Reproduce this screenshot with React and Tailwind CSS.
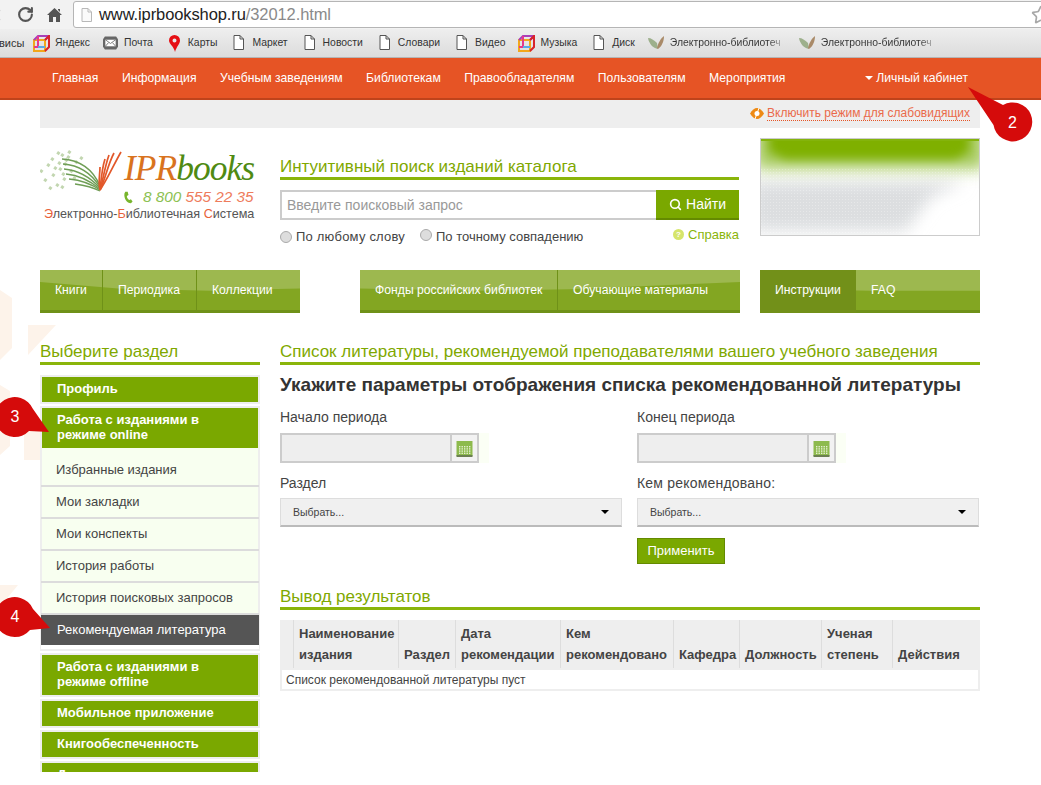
import React from "react";
import { RotateCw, ChevronLeft, Search, Star } from "lucide-react";

const FileIcon = () => (
  <svg width="11" height="15" viewBox="0 0 11 15" className="shrink-0">
    <path d="M1 .5h6l3.500 3.500v10.500h-9.500z M7 .5v3.500h3.500" fill="#fff" stroke="#555" strokeWidth="1" />
  </svg>
);
const Cube = () => (
  <svg width="17" height="17" viewBox="0 0 17 17" className="shrink-0" fill="none" strokeWidth="2">
    <path d="M1 5h11v11H1z" stroke="#f2a71b" />
    <path d="M1 5l4-4h11l-4 4" stroke="#a83fb8" />
    <path d="M12 5l4-4v11l-4 4" stroke="#d8232a" />
    <path d="M5 1v11H1" stroke="#e6398c" />
    <path d="M5 12h7" stroke="#5aa9e6" />
  </svg>
);
const Mail = () => (
  <svg width="15" height="16" viewBox="0 0 16 16" className="shrink-0">
    <path d="M2 1h12l2 3v8l-2 3H2l-2-3V4z" fill="#666" />
    <rect x="2.500" y="4.500" width="11" height="7" fill="#fff" />
    <path d="M2.500 4.500L8 8.500l5.500-4M2.500 11.500L6 7.500M13.500 11.500L10 7.500" fill="none" stroke="#777" />
  </svg>
);
const Pin = () => (
  <svg width="11" height="17" viewBox="0 0 11 17" className="shrink-0">
    <path fillRule="evenodd" d="M5.500 0a5.500 5.500 0 0 1 5.500 5.500c0 3.500-3.500 6-5 11.500C5 11.500 0 9 0 5.500A5.500 5.500 0 0 1 5.500 0zm0 3.500a2 2 0 1 0 0 4 2 2 0 0 0 0-4z" fill="#e60f14" />
  </svg>
);
const Wing = () => (
  <svg width="17" height="15" viewBox="0 0 17 15" className="shrink-0">
    <path d="M0 3c3 0 6 2 9 5l1 6C5 13 1 9 0 3z" fill="#9db08c" />
    <path d="M9 13C10 8 13 3 16 1c0 5-2 10-6 13z" fill="#a98a68" />
  </svg>
);

const Bookmark = ({ icon, children, className = "" }) => (
  <div className={`flex items-center shrink-0 ${className}`}>
    {icon}
    <span>{children}</span>
  </div>
);

const Callout = ({ d, label, className, tx, ty, w, h }) => (
  <svg width={w} height={h} viewBox={`0 0 ${w} ${h}`} className={`absolute z-20 ${className}`}>
    <path d={d} fill="#d50b0b" />
    <text x={tx} y={ty} fill="#fff" fontSize="16" textAnchor="middle" fontFamily="Liberation Sans, sans-serif">{label}</text>
  </svg>
);

const NavGroup = ({ className = "", gloss, children }) => (
  <div className={`relative flex h-[43px] bg-[#83a622] border-b-[3px] border-[#6f9118] ${className}`}>
    <div className={`absolute inset-0 bg-[#9db84f] ${gloss}`} />
    {children}
  </div>
);
const NavItem = ({ children, border, active, className = "" }) => (
  <div className={`relative z-10 flex items-center text-[12.200px] text-white ${border ? "border-r border-[#6f9118]" : ""} ${active ? "bg-[#729019] -mb-[3px] pb-[3px]" : ""} ${className}`}>
    {children}
  </div>
);

const GreenItem = ({ children, className = "" }) => (
  <div className={`border-2 border-[#eeeeee] ${className}`}>
    <div className="bg-[#7aa800] text-white font-bold text-[13px] leading-[15px] px-[15px] pt-[4px] pb-[6px] whitespace-nowrap">{children}</div>
  </div>
);
const SubItem = ({ children, className = "" }) => (
  <div className={`h-[32px] flex items-center pl-[15px] text-[13px] text-[#444] border-b-2 border-[#dcdcdc] mx-[-1px] ${className}`}>{children}</div>
);

const Title = ({ children, className = "" }) => (
  <div className={`text-[17px] leading-[18px] text-[#7fa800] border-b-[3px] border-[#8ab50a] pb-[1px] whitespace-nowrap ${className}`}>{children}</div>
);

const Calendar = () => (
  <svg width="17" height="17" viewBox="0 0 17 17">
    <rect x="0.500" y="1" width="16" height="15" fill="#8dba4d" />
    <rect x="0.500" y="15" width="16" height="2" fill="#6b7f52" />
    <g fill="#e6f1d4">
      {[0, 1, 2, 3, 4].map((i) =>
        [0, 1, 2, 3].map((j) => <rect key={`${i}${j}`} x={3 + i * 2.500} y={6 + j * 2.200} width="1.400" height="1.400" />)
      )}
    </g>
  </svg>
);

const DateField = () => (
  <div className="w-[209px] bg-[#fbfff5]">
    <div className="w-[199px] h-[30px] border-2 border-[#cccccc] bg-[#eeeeee] flex justify-end">
      <div className="w-[27px] bg-[#f2f2f2] border-l-2 border-[#cccccc] flex items-center justify-center">
        <Calendar />
      </div>
    </div>
  </div>
);

const SelectBox = () => (
  <div className="w-[342px] h-[29px] bg-[#f0f0f0] border border-[#dddddd] border-b-2 border-b-[#bbbbbb] flex items-center justify-between px-[12px] text-[10.500px] text-[#444]">
    <span>Выбрать...</span>
    <span className="w-0 h-0 border-x-[4px] border-x-transparent border-t-[4px] border-t-black" />
  </div>
);

const Radio = () => (
  <span className="inline-block w-[12px] h-[12px] rounded-full border border-[#aaa] bg-[#dddddd] shrink-0" />
);

const columns = [
  ["", ""],
  ["Наименование", "издания"],
  ["", "Раздел"],
  ["Дата", "рекомендации"],
  ["Кем", "рекомендовано"],
  ["", "Кафедра"],
  ["", "Должность"],
  ["Ученая", "степень"],
  ["", "Действия"],
];

const Logo = () => (
  <div className="w-[240px] h-[92px] relative">
    <svg width="100" height="62" viewBox="0 0 100 62" className="absolute left-0 top-[4px]">
      <g fill="#c2d6b0">
        {[[1,27],[5,36],[8,21],[13,31],[17,41],[12,15],[20,25],[24,35],[28,13],[25,20],[31,27],[34,34],[36,18],[29,8],[22,43],[10,44],[41,14],[18,9],[22,11],[26,16],[19,19],[15,24],[23,30]].map(([x, y], i) => (
          <rect key={i} x={x} y={y} width="3" height="3" transform={`rotate(35 ${x} ${y})`} />
        ))}
      </g>
      <g fill="none" stroke="#6f9e56" strokeWidth="1.300">
        <path d="M22 17C38 18 52 25 60 44" />
        <path d="M23 22C37 23 50 29 60 45" />
        <path d="M24 27C36 28 48 33 60 46" />
        <path d="M26 32C37 33 48 37 60 47" />
        <path d="M29 37C39 38 50 41 60 48" />
        <path d="M35 42C42 43 52 45 60 49" />
      </g>
      <g fill="none" stroke="#e2582a" strokeWidth="1.700">
        <path d="M60 48C58 40 60 32 60 25" />
        <path d="M60 48C61 38 62 26 65 17" />
        <path d="M60 48C63 38 65 24 69 13" />
        <path d="M60 48C65 38 68 22 74 11" />
        <path d="M60 48C67 38 74 22 81 10" />
      </g>
    </svg>
    <div className="absolute left-[84px] top-[10px] text-[35.500px] leading-[40px] italic whitespace-nowrap font-['Liberation_Serif',serif] tracking-[-1px]">
      <span className="text-[#d9731e]">IPR</span><span className="text-[#4f8a12]">books</span>
    </div>
    <svg width="11" height="13" viewBox="0 0 12 16" className="absolute left-[83px] top-[53px]">
      <path d="M2 1l3 0 1 4-2 1c0 2 1 4 3 5l2-1 2 3-2 2C4 15 0 9 1 3z" fill="#78b52d" />
    </svg>
    <div className="absolute left-[103px] top-[50px] text-[15.300px] leading-[18px] italic whitespace-nowrap text-[#8cc152]">
      8 800 <span className="text-[#ee7c5c]">555 22 35</span>
    </div>
    <div className="absolute left-[4px] top-[68px] text-[12.600px] leading-[16px] whitespace-nowrap text-[#555]">
      <span className="text-[#e8623a]">Э</span>лектронно-<span className="text-[#e8623a]">Б</span>иблиотечная <span className="text-[#e8623a]">С</span>истема
    </div>
  </div>
);

const Banner = () => (
  <div className="w-[220px] h-[98px] border border-[#cccccc] overflow-hidden">
    <svg width="218" height="96" viewBox="0 0 218 96">
      <defs>
        <filter id="b1" x="-20%" y="-60%" width="140%" height="220%"><feGaussianBlur stdDeviation="8" /></filter>
        <filter id="b2" x="-20%" y="-60%" width="140%" height="220%"><feGaussianBlur stdDeviation="5" /></filter>
        <pattern id="dots" width="3" height="3" patternUnits="userSpaceOnUse"><rect width="1" height="1" fill="#fff" fillOpacity="0.300" /></pattern>
      </defs>
      <rect width="218" height="96" fill="#ffffff" />
      <path d="M-10 42H205L170 58 145 92H-10z" fill="#dcdee0" filter="url(#b1)" />
      <path d="M-6 -16H224V30H-6z" fill="#a4c95a" filter="url(#b1)" />
      <path d="M8 -12H208V12L195 20H24L8 12z" fill="#7fb006" filter="url(#b2)" />
      <rect y="30" width="218" height="66" fill="url(#dots)" />
      <rect x="0" y="0" width="218" height="2" fill="#84b40c" />
    </svg>
  </div>
);

export default function App() {
  return (
    <div className="relative w-[1041px] h-[785px] overflow-hidden bg-white font-['Liberation_Sans',sans-serif]">
      {/* faint background decoration */}
      <svg width="60" height="400" viewBox="0 0 60 400" className="absolute left-0 top-[285px]">
        <g fill="#fdf3ea">
          <path d="M0 5l12 8v50L0 75z" />
          <path d="M28 40h28l-28 30z" />
          <path d="M0 100l10 6v55L0 170z" />
          <path d="M24 120l20 30v25H24z" />
          <path d="M0 300h18l-18 22z" />
        </g>
      </svg>

      {/* browser toolbar */}
      <div className="relative h-[29px] bg-[#f2f2f2] flex items-center">
        <ChevronLeft size={18} strokeWidth={3} className="text-[#c4c4c4] -ml-[12px]" />
        <RotateCw size={17} strokeWidth={3} className="text-[#555] ml-[11px]" />
        <svg width="15" height="14" viewBox="0 0 15 14" className="ml-[13px] shrink-0">
          <path d="M7.500 0L15 7h-2v7H9V9H6v5H2V7H0z M11 1h2v3l-2-2z" fill="#555" />
        </svg>
        <div className="ml-[11px] flex-1 h-[27px] bg-white border border-[#b5b5b5] rounded-l-[3px] flex items-center pl-[7px] -mr-[2px]">
          <svg width="11" height="14" viewBox="0 0 11 14" className="shrink-0">
            <path d="M1 .5h6l3.500 3.500v9.500h-9.500z M7 .5v3.500h3.500" fill="#fafafa" stroke="#b8b8b8" />
          </svg>
          <span className="ml-[7px] text-[16.500px] tracking-[-0.100px] text-[#222]">www.iprbookshop.ru<span className="text-[#8a8a8a]">/32012.html</span></span>
          <Star size={20} className="ml-auto -mr-[9px] text-[#a8a8a8]" />
        </div>
      </div>

      {/* bookmarks bar */}
      <div className="h-[29px] bg-gradient-to-b from-[#eeeeee] to-[#dcdcdc] border-b border-[#b5b5b5] flex items-center text-[10.400px] text-[#333] gap-[16px] whitespace-nowrap overflow-hidden">
        <span className="w-[34px] shrink-0 -mr-[16px] -ml-[1px] text-[11px]">висы</span>
        <Bookmark icon={<Cube />} className="gap-[5px]">Яндекс</Bookmark>
        <Bookmark icon={<Mail />} className="gap-[6px] -ml-[3px]">Почта</Bookmark>
        <Bookmark icon={<Pin />} className="gap-[8px]">Карты</Bookmark>
        <Bookmark icon={<FileIcon />} className="gap-[8px]">Маркет</Bookmark>
        <Bookmark icon={<FileIcon />} className="gap-[8px]">Новости</Bookmark>
        <Bookmark icon={<FileIcon />} className="gap-[8px]">Словари</Bookmark>
        <Bookmark icon={<FileIcon />} className="gap-[8px]">Видео</Bookmark>
        <Bookmark icon={<Cube />} className="gap-[5px] -ml-[3px]">Музыка</Bookmark>
        <Bookmark icon={<FileIcon />} className="gap-[8px]">Диск</Bookmark>
        <Bookmark icon={<Wing />} className="gap-[5px] -ml-[3px]"><span className="inline-block w-[116px] overflow-hidden align-bottom bg-gradient-to-r from-[#333] from-85% to-[#ddd] bg-clip-text text-transparent">Электронно-библиотеч</span></Bookmark>
        <Bookmark icon={<Wing />} className="gap-[5px] -ml-[3px]"><span className="inline-block w-[116px] overflow-hidden align-bottom bg-gradient-to-r from-[#333] from-85% to-[#ddd] bg-clip-text text-transparent">Электронно-библиотеч</span></Bookmark>
      </div>

      {/* orange nav */}
      <div className="h-[42px] bg-[#e65425] border-b-2 border-[#bf431b] flex items-center pl-[52px] pr-[73px] gap-[23.500px] text-[12.200px] text-white whitespace-nowrap">
        <span>Главная</span>
        <span>Информация</span>
        <span>Учебным заведениям</span>
        <span>Библиотекам</span>
        <span>Правообладателям</span>
        <span>Пользователям</span>
        <span>Мероприятия</span>
        <span className="ml-auto flex items-center gap-[3px]">
          <span className="w-0 h-0 border-x-[4px] border-x-transparent border-t-[4px] border-t-white" />
          Личный кабинет
        </span>
      </div>

      <div className="relative ml-[40px] w-[940px]">
        {/* accessibility bar */}
        <div className="h-[28px] bg-[#eeeeee] flex items-center justify-end pr-[10px] pb-[2px]">
          <svg width="14" height="13" viewBox="0 0 14 13" className="mr-[3px]">
            <path d="M0 6.500C2 3 4.500 1 7 1s5 2 7 5.500C12 10 9.500 12 7 12S2 10 0 6.500z" fill="#ee8a14" />
            <circle cx="7" cy="6.500" r="2.500" fill="#fff" />
            <path d="M9 1L5 12" stroke="#fff" strokeWidth="1" />
          </svg>
          <span className="text-[12px] text-[#ea6a4a] border-b border-dotted border-[#e65425] leading-[14px]">Включить режим для слабовидящих</span>
        </div>

        {/* header */}
        <div className="flex h-[142px]">
          <div className="w-[240px] pt-[10px]"><Logo /></div>
          <div className="w-[459px] pt-[30px]">
            <Title>Интуитивный поиск изданий каталога</Title>
            <div className="flex mt-[10px] h-[30px]">
              <div className="flex-1 border-2 border-[#cccccc] border-r-0 flex items-center pl-[5px] text-[14px] text-[#999]">Введите поисковый запрос</div>
              <div className="w-[83px] bg-[#7aa800] border-b-2 border-[#648a00] flex items-center justify-center gap-[4px] text-[14px] text-white">
                <Search size={13} strokeWidth={3} />
                Найти
              </div>
            </div>
            <div className="flex items-center mt-[9px] text-[13px] text-[#444] leading-[16px]">
              <Radio /><span className="ml-[4px] tracking-[0.200px]">По любому слову</span>
              <span className="ml-[15px]"><Radio /></span><span className="ml-[4px]">По точному совпадению</span>
              <span className="ml-auto -mt-[5px] flex items-center gap-[4px] text-[#8ab50a]">
                <span className="w-[11px] h-[11px] rounded-full bg-[#d6e56b] text-white text-[8px] font-bold flex items-center justify-center">?</span>
                Справка
              </span>
            </div>
          </div>
          <div className="ml-[21px] pt-[10px]"><Banner /></div>
        </div>

        {/* green nav */}
        <div className="flex whitespace-nowrap">
          <NavGroup className="w-[260px]" gloss="[clip-path:polygon(0_0,100%_0,100%_46%,65%_52%,30%_46%,0_30%)]">
            <NavItem border className="w-[63px] pl-[15px]">Книги</NavItem>
            <NavItem border className="w-[94px] pl-[15px]">Периодика</NavItem>
            <NavItem className="pl-[15px]">Коллекции</NavItem>
          </NavGroup>
          <NavGroup className="w-[380px] ml-[60px]" gloss="[clip-path:polygon(0_0,100%_0,100%_30%,55%_48%,30%_52%,0_46%)]">
            <NavItem border className="w-[198px] pl-[15px]">Фонды российских библиотек</NavItem>
            <NavItem className="pl-[15px]">Обучающие материалы</NavItem>
          </NavGroup>
          <NavGroup className="w-[220px] ml-[20px]" gloss="[clip-path:polygon(0_0,100%_0,100%_52%,50%_52%,0_46%)]">
            <NavItem active className="w-[96px] pl-[15px]">Инструкции</NavItem>
            <NavItem className="pl-[15px]">FAQ</NavItem>
          </NavGroup>
        </div>

        {/* main two-column */}
        <div className="flex mt-[30px]">
          <aside className="w-[220px] h-[429px] overflow-hidden">
            <Title>Выберите раздел</Title>
            <GreenItem className="mt-[10px]">Профиль</GreenItem>
            <div className="mt-[2px] border-2 border-[#eeeeee] bg-[#f8fff0]">
              <div className="bg-[#7aa800] text-white font-bold text-[13px] leading-[15px] px-[15px] pt-[4px] pb-[6px]">Работа с изданиями в<br />режиме online</div>
              <SubItem className="h-[39px] pt-[6px]">Избранные издания</SubItem>
              <SubItem>Мои закладки</SubItem>
              <SubItem>Мои конспекты</SubItem>
              <SubItem>История работы</SubItem>
              <SubItem>История поисковых запросов</SubItem>
              <div className="h-[30px] mx-[-1px] bg-[#555555] text-white text-[13px] flex items-center pl-[16px]">Рекомендуемая литература</div>
              <div className="h-[4px] bg-white mx-[-1px]" />
            </div>
            <GreenItem className="mt-[2px]">Работа с изданиями в<br />режиме offline</GreenItem>
            <GreenItem className="mt-[2px]">Мобильное приложение</GreenItem>
            <GreenItem className="mt-[2px]">Книгообеспеченность</GreenItem>
            <GreenItem className="mt-[2px]">Дополнительно</GreenItem>
          </aside>

          <main className="ml-[20px] w-[700px]">
            <Title>Список литературы, рекомендуемой преподавателями вашего учебного заведения</Title>
            <h2 className="mt-[10px] text-[19px] leading-[20px] font-bold text-[#333] whitespace-nowrap">Укажите параметры отображения списка рекомендованной литературы</h2>
            <div className="grid grid-cols-[357px_343px] text-[14px] text-[#444] leading-[16px] mt-[14px]">
              <div>
                <div>Начало периода</div>
                <div className="mt-[8px]"><DateField /></div>
                <div className="mt-[12px]">Раздел</div>
                <div className="mt-[7px]"><SelectBox /></div>
              </div>
              <div>
                <div>Конец периода</div>
                <div className="mt-[8px]"><DateField /></div>
                <div className="mt-[12px] tracking-[0.200px]">Кем рекомендовано:</div>
                <div className="mt-[7px]"><SelectBox /></div>
                <div className="mt-[11px] w-[88px] h-[26px] bg-[#7aa800] border border-[#648a00] text-white text-[13px] flex items-center justify-center">Применить</div>
              </div>
            </div>

            <Title className="mt-[24px]">Вывод результатов</Title>
            <div className="mt-[10px] w-[700px]">
              <div className="grid grid-cols-[14px_105px_57px_105px_113px_66px_82px_71px_87px] bg-[#eeeeee] h-[48px] text-[13px] font-bold text-[#444]">
                {columns.map(([a, b], i) => (
                  <div key={i} className={`pl-[5px] flex flex-col justify-end pb-[3px] leading-[21px] whitespace-nowrap ${i < 8 ? "border-r border-[#dddddd]" : ""}`}>
                    {a && <span>{a}</span>}
                    <span>{b}</span>
                  </div>
                ))}
              </div>
              <div className="h-[23px] border-2 border-[#eeeeee] flex items-center pl-[4px] text-[12px] text-[#444]">Список рекомендованной литературы пуст</div>
            </div>
          </main>
        </div>
      </div>

      {/* annotation callouts */}
      <Callout w={76} h={60} className="left-[966px] top-[85px]" d="M2 2L37 20A19.500 19.500 0 1 1 27.500 40Z" label="2" tx="46.500" ty="43" />
      <Callout w={54} h={44} className="left-0 top-[396px]" d="M33 13L49 36L29 35A20 20 0 1 1 33 13Z" label="3" tx="15" ty="26" />
      <Callout w={54} h={44} className="left-0 top-[595px]" d="M33 14L50 33L30 35A20 20 0 1 1 33 14Z" label="4" tx="15" ty="27" />
    </div>
  );
}
